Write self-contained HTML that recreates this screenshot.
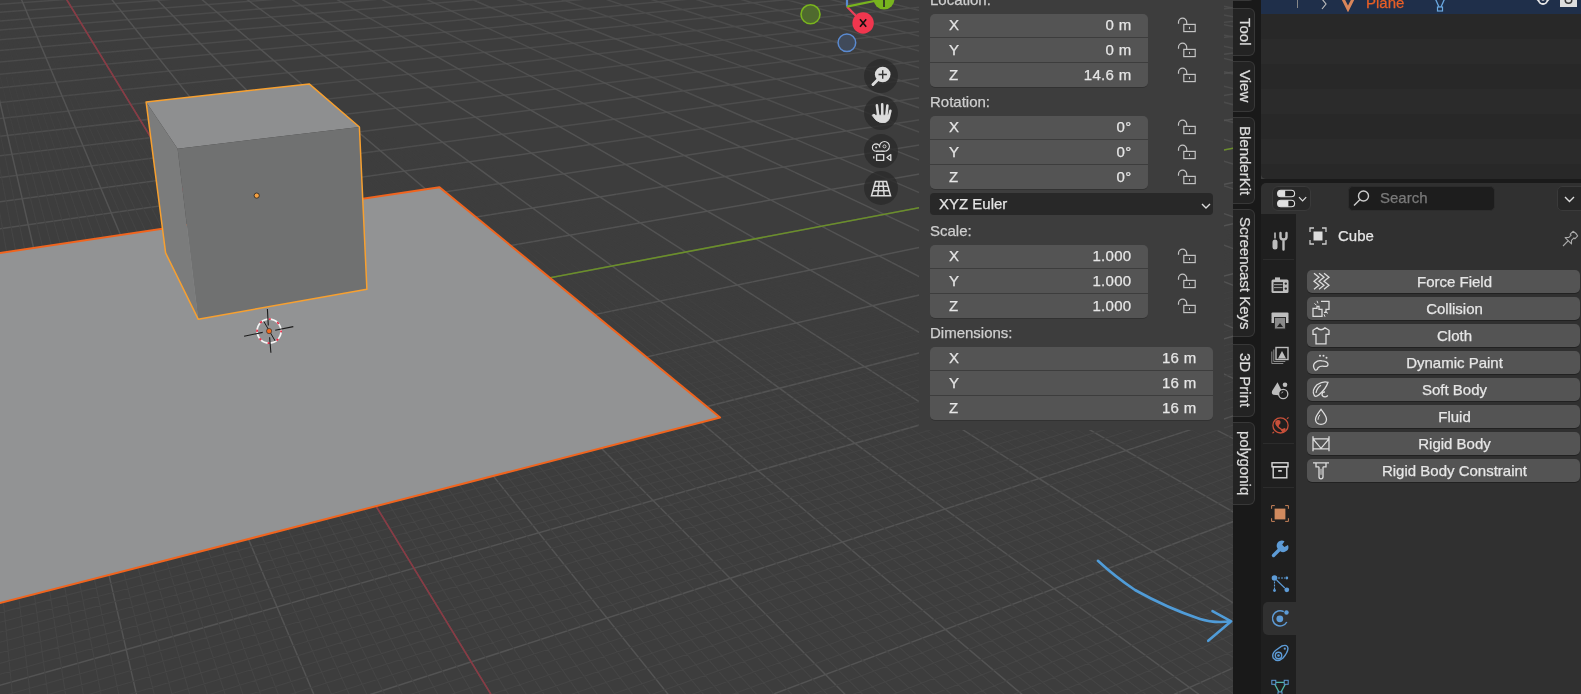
<!DOCTYPE html>
<html><head><meta charset="utf-8"><style>
*{margin:0;padding:0}
html,body{width:1581px;height:694px;overflow:hidden;background:#3d3d3d;font-family:"Liberation Sans",sans-serif;-webkit-text-stroke:0.25px currentColor}
.abs{position:absolute;will-change:transform}
.fb{border-radius:5px;overflow:hidden;box-shadow:0 1px 0 rgba(0,0,0,0.18)}
.row{background:#545454}
.row .lab{position:absolute;left:19px;top:2.5px;font-size:15px;color:#e6e6e6}
.row .val{position:absolute;right:16.5px;top:2.5px;letter-spacing:0.3px;font-size:15px;color:#e6e6e6}
.lbl{font-size:15px;color:#cfcfcf}
.txt{font-size:15px;color:#e6e6e6}
.tab{background:#232323;border:1px solid #383838;border-left:none;border-radius:0 6px 6px 0;box-sizing:border-box}
.vt{display:flex;align-items:center;justify-content:center;padding-left:2px;box-sizing:border-box}
.vt span{writing-mode:vertical-rl;font-size:15px;color:#dcdcdc;white-space:nowrap}
.pbtn{background:#545454;border-radius:5px;box-shadow:0 1px 0 rgba(0,0,0,0.3);text-align:center}
.pbtn span{display:block;font-size:15px;line-height:23px;color:#e6e6e6;padding-left:22px}
</style></head><body>
<svg class="abs" style="left:0;top:0" width="1233" height="694" viewBox="0 0 1233 694">
<rect width="1233" height="694" fill="#3d3d3d"/>
<g stroke-width="1.2" fill="none">
<path d="M-113.8 -2.5L963.5 -76.7M-114.9 4.9L985.5 -73.3M-116.1 12.8L1008.5 -69.7M-117.3 21.2L1032.5 -66.0M-118.7 30.2L1057.5 -62.1M-120.1 39.8L1083.7 -58.1M-121.7 50.1L1111.2 -53.8M-123.4 61.3L1140.0 -49.4M-125.2 73.4L1170.2 -44.7M-127.1 86.4L1202.0 -39.8M-129.3 100.6L1235.4 -34.6M-131.6 116.2L1270.6 -29.1M-12.9 120.0L1307.7 -23.4M277.3 104.7L1347.0 -17.3M555.7 89.1L1388.5 -10.9M820.2 73.5L1432.5 -4.1M1078.5 57.0L1479.3 3.2M375.6 -42.1L477.4 1.8M407.3 -44.2L563.7 18.2M438.3 -46.3L662.7 36.9M468.7 -48.3L761.2 53.1M498.5 -50.3L871.9 71.2M527.6 -52.3L986.0 88.3M556.0 -54.2L1113.3 107.3M583.9 -56.0L1240.8 124.5M611.3 -57.9L1381.4 143.4M638.0 -59.6L1516.9 159.2M664.3 -61.4L1687.5 182.0M690.0 -63.1L1851.2 201.3M715.2 -64.8L1999.8 215.7M739.9 -66.4L2192.6 238.2M764.1 -68.1L2366.1 255.1M787.9 -69.7L2552.3 273.3M811.2 -71.2L2571.9 259.0M834.1 -72.7L2590.4 245.4M856.6 -74.2L2608.0 232.6M878.6 -75.7L2624.6 220.5M900.2 -77.2L2640.4 208.9M921.5 -78.6L2655.4 198.0M942.4 -80.0L2669.7 187.5M962.8 -81.3L2683.3 177.6" stroke="#535353" stroke-width="1.5" stroke-opacity="0.625"/>
<path d="M-136.9 151.9L277.3 104.7M-140.0 172.6L555.7 89.1M-81.5 187.8L820.2 73.5M264.4 166.2L1078.5 57.0M590.8 144.6L1317.8 41.0M895.7 123.4L1538.4 25.7M1188.1 101.2L1638.7 27.9M241.1 -33.1L304.4 7.5M275.9 -35.4L388.9 29.2M322.8 -31.0L484.4 52.3M397.8 -14.2L591.2 76.6M477.4 1.8L700.1 98.0M563.7 18.2L824.8 122.4M662.7 36.9L956.0 145.8M761.2 53.1L1105.3 172.4M871.9 71.2L1257.8 196.8M986.0 88.3L1429.6 224.3M1113.3 107.3L1597.8 247.8" stroke="#535353" stroke-width="1.5" stroke-opacity="0.750"/>
<path d="M-147.4 221.4L264.4 166.2M-151.7 250.4L590.8 144.6M246.3 222.1L895.7 123.4M616.3 194.3L1188.1 101.2M956.8 167.4L1454.2 80.2M131.8 -25.8L161.3 4.0M169.1 -28.3L234.8 27.4M228.1 -14.3L320.2 53.0M304.4 7.5L418.6 80.7M388.9 29.2L530.7 110.2M484.4 52.3L656.5 141.1M591.2 76.6L795.0 172.4M700.1 98.0L943.6 203.1M824.8 122.4L1098.1 231.4M956.0 145.8L1273.6 263.6M1105.3 172.4L1474.9 300.6" stroke="#535353" stroke-width="1.5" stroke-opacity="0.875"/>
<path d="M-156.7 283.4L246.3 222.1M-162.3 321.1L616.3 194.3M-168.8 364.6L956.8 167.4M-176.5 415.6L1278.1 139.6M-185.5 475.9L1574.3 112.0M-196.4 548.6L1848.9 83.8M-209.8 637.7L1991.7 82.5M-226.6 749.5L2080.5 96.3M-248.2 894.1L2177.2 111.3M-277.4 1088.3L2283.0 127.7M-318.5 1362.9L2399.2 145.7M-381.2 1781.0L2527.4 165.5M-488.2 2494.4L2669.7 187.5M-712.1 3987.7L2828.3 212.1M-69.4 -12.4L16.9 2125.4M-27.1 -15.2L401.7 1844.3M14.1 -18.0L704.5 1623.1M54.3 -20.6L949.1 1444.5M97.2 -18.7L1150.7 1297.1M161.3 4.0L1319.8 1173.6M234.8 27.4L1463.7 1068.5M320.2 53.0L1587.5 978.0M418.6 80.7L1695.3 899.3M530.7 110.2L1789.9 830.2M656.5 141.1L1873.7 769.0M795.0 172.4L1948.3 714.5M943.6 203.1L2015.3 665.6M1098.1 231.4L2075.6 621.5" stroke="#535353" stroke-width="1.5" stroke-opacity="1.000"/>
<path d="M-170.3 374.2L0.4 343.8M-171.0 379.1L54.5 338.6M-171.8 384.0L107.7 333.5M-172.5 389.1L159.9 328.5M-173.3 394.2L211.2 323.6M-174.1 399.4L261.6 318.8M-174.9 404.7L287.8 318.4M-113.3 398.4L337.1 313.6M6.1 386.1L433.1 304.4M35.7 385.6L479.9 299.9M93.3 379.6L525.9 295.4M149.8 373.8L571.2 291.1M205.3 368.0L615.7 286.8M259.7 362.4L659.5 282.6M288.0 361.9L702.6 278.4M341.1 356.4L744.9 274.4M393.2 351.0L786.7 270.3M494.6 340.5L868.1 262.5M543.9 335.3L907.9 258.7M592.4 330.3L963.1 251.5M639.9 325.3L1001.3 247.8M686.7 320.5L1038.9 244.2M732.7 315.7L1076.0 240.7M777.8 311.0L1112.5 237.2M822.2 306.4L1162.4 230.6M865.9 301.9L1197.5 227.2M951.0 293.0L1279.1 217.7M1009.3 284.8L1312.4 214.5M1049.7 280.6L1345.2 211.4M1089.4 276.5L1389.4 205.5M1128.5 272.5L1421.0 202.5M1167.0 268.5L1463.3 196.9M1219.4 261.0L1493.9 194.0M-13.6 3.3L-2.4 45.3M-8.6 4.9L2.9 44.8M-3.5 6.5L8.9 47.0M1.7 8.1L15.1 49.2M6.9 9.7L21.3 51.4M11.5 9.3L27.6 53.6M16.8 11.0L33.0 53.2M22.2 12.7L39.4 55.4M33.3 16.1L52.6 60.1M39.9 19.9L59.4 62.5M45.6 21.7L66.3 64.9M51.5 23.5L73.3 67.4M57.4 25.4L80.4 69.9M63.4 27.2L87.6 72.5M69.5 29.1L94.9 75.1M75.6 31.0L102.4 77.7M81.9 33.0L110.0 80.4M94.7 37.0L125.5 85.9M102.9 41.5L133.5 88.7M109.6 43.6L141.6 91.6M116.4 45.7L149.9 94.5M123.3 47.9L158.3 97.5M130.3 50.1L166.9 100.5M137.5 52.3L175.6 103.6M146.8 57.4L184.5 106.7M154.3 59.7L193.5 109.9M169.5 64.5L212.1 116.5M177.3 67.0L221.7 119.9M185.3 69.5L231.4 123.3M193.4 72.0L241.4 126.8M201.6 74.6L251.5 130.4M212.9 80.5L261.9 134.0M221.4 83.2L272.4 137.8M230.2 86.0L283.2 141.6M239.1 88.8L294.1 145.4M257.3 94.6L316.8 153.4M266.7 97.6L328.4 157.6M276.3 100.6L335.0 156.7M286.0 103.7L347.0 160.9M295.9 106.8L359.2 165.2M305.9 110.0L371.7 169.5M316.2 113.3L384.4 174.0M326.7 116.6L397.5 178.6M337.3 120.0L410.8 183.3M359.2 126.9L438.4 192.9M370.5 130.5L445.3 191.9M382.0 134.2L459.6 196.8M393.8 137.9L474.2 201.9M405.8 141.7L489.2 207.2M418.0 145.6L504.6 212.5M430.4 149.5L520.3 218.0M443.2 153.6L527.4 216.8M456.2 157.7L543.6 222.4M483.0 166.2L577.1 233.9M489.4 165.3L594.5 239.9M503.3 169.7L601.7 238.6M517.5 174.1L619.6 244.8M532.0 178.7L637.9 251.0M546.8 183.4L656.8 257.5M562.0 188.1L664.1 256.1M568.5 187.1L683.5 262.7M584.1 192.0L703.4 269.4M616.3 202.1L731.2 274.9M632.9 207.3L752.3 282.0M639.6 206.2L773.9 289.3M656.7 211.5L781.3 287.7M674.2 216.9L803.6 295.2M692.1 222.5L826.6 302.8M698.8 221.3L834.0 301.2M717.3 227.0L857.7 309.0M736.1 232.8L882.0 317.1M762.3 237.5L914.6 323.6M782.2 243.6L922.0 321.8M802.6 249.8L947.9 330.3M809.4 248.5L974.6 339.0M830.3 254.8L982.0 337.1M851.9 261.4L1009.6 346.1M858.7 260.0L1038.0 355.3M880.8 266.7L1045.4 353.3M903.5 273.5L1074.8 362.7M933.7 279.1L1112.5 370.4M957.8 286.3L1119.8 368.3M964.6 284.7L1151.1 378.2M989.3 292.1L1183.5 388.5M1014.8 299.7L1190.8 386.3M1021.6 298.0L1224.3 396.8M1047.8 305.8L1231.6 394.5M1054.6 304.1L1266.1 405.3M1081.6 312.0L1273.4 403.0M1116.1 318.4L1316.3 411.7M1144.8 326.8L1353.3 423.1M1151.5 325.0L1360.5 420.6M1181.0 333.5L1398.8 432.4M1211.4 342.4L1405.8 429.8M1218.1 340.5L1445.5 441.9" stroke="#454545" stroke-width="1.1" stroke-opacity="0.125"/>
<path d="M-177.3 421.2L6.1 386.1M-178.2 426.8L35.7 385.6M-179.0 432.6L93.3 379.6M-179.9 438.5L149.8 373.8M-147.7 437.9L205.3 368.0M-83.3 430.9L259.7 362.4M-20.3 424.0L288.0 361.9M41.5 417.3L341.1 356.4M102.0 410.7L393.2 351.0M191.5 403.7L494.6 340.5M249.2 397.4L543.9 335.3M305.8 391.2L592.4 330.3M361.3 385.1L639.9 325.3M415.7 379.2L686.7 320.5M469.1 373.3L732.7 315.7M497.7 372.9L777.8 311.0M549.7 367.1L822.2 306.4M600.8 361.5L865.9 301.9M700.1 350.6L951.0 293.0M748.4 345.3L1009.3 284.8M795.8 340.1L1049.7 280.6M861.9 330.4L1089.4 276.5M907.1 325.4L1128.5 272.5M951.5 320.6L1167.0 268.5M995.1 315.8L1219.4 261.0M1038.0 311.1L1256.4 257.2M1080.2 306.5L1292.7 253.5M1178.2 293.5L1376.6 242.9M1217.8 289.1L1411.0 239.3M-8.3 43.2L-0.5 74.4M-2.4 45.3L6.2 77.0M2.9 44.8L12.0 76.5M8.9 47.0L18.8 79.1M15.1 49.2L25.7 81.8M21.3 51.4L32.7 84.6M27.6 53.6L38.7 84.0M33.0 53.2L45.8 86.8M39.4 55.4L53.2 89.6M52.6 60.1L68.2 95.5M59.4 62.5L74.2 94.8M66.3 64.9L82.0 97.8M73.3 67.4L89.9 100.8M80.4 69.9L97.9 103.9M87.6 72.5L106.1 107.1M94.9 75.1L114.4 110.3M102.4 77.7L122.9 113.6M110.0 80.4L131.6 116.9M125.5 85.9L146.7 119.5M133.5 88.7L155.7 123.0M141.6 91.6L165.0 126.5M149.9 94.5L174.3 130.1M158.3 97.5L183.9 133.7M166.9 100.5L193.7 137.4M175.6 103.6L203.6 141.2M184.5 106.7L213.8 145.1M193.5 109.9L224.1 149.0M212.1 116.5L245.5 157.2M221.7 119.9L256.5 161.4M231.4 123.3L267.8 165.7M241.4 126.8L274.7 164.8M251.5 130.4L286.2 169.1M261.9 134.0L298.0 173.6M272.4 137.8L310.1 178.2M283.2 141.6L322.5 182.8M294.1 145.4L335.1 187.6M316.8 153.4L361.2 197.5M328.4 157.6L368.4 196.4M335.0 156.7L382.0 201.5M347.0 160.9L395.8 206.7M359.2 165.2L410.1 212.0M371.7 169.5L424.6 217.5M384.4 174.0L439.6 223.1M397.5 178.6L454.9 228.8M410.8 183.3L462.3 227.6M438.4 192.9L494.1 239.4M445.3 191.9L510.7 245.6M459.6 196.8L518.2 244.2M474.2 201.9L535.3 250.5M489.2 207.2L552.7 256.9M504.6 212.5L570.7 263.5M520.3 218.0L589.1 270.3M527.4 216.8L596.8 268.9M543.6 222.4L615.8 275.8M577.1 233.9L643.0 281.4M594.5 239.9L663.1 288.7M601.7 238.6L683.8 296.2M619.6 244.8L705.0 303.9M637.9 251.0L712.9 302.2M656.8 257.5L734.8 310.1M664.1 256.1L757.4 318.2M683.5 262.7L765.3 316.4M703.4 269.4L788.6 324.7M731.2 274.9L820.5 331.4M752.3 282.0L845.3 340.2M773.9 289.3L870.8 349.2M781.3 287.7L878.8 347.3M803.6 295.2L905.2 356.5M826.6 302.8L913.1 354.5M834.0 301.2L940.4 364.0M857.7 309.0L968.5 373.8M882.0 317.1L976.5 371.7M914.6 323.6L1013.5 379.6M922.0 321.8L1043.6 389.9M947.9 330.3L1074.7 400.5M974.6 339.0L1082.6 398.2M982.0 337.1L1114.9 409.2M1009.6 346.1L1122.7 406.8M1038.0 355.3L1156.1 418.1M1045.4 353.3L1163.9 415.6M1074.8 362.7L1198.4 427.2M1112.5 370.4L1242.0 436.6M1119.8 368.3L1279.1 448.9M1151.1 378.2L1286.8 446.2M1183.5 388.5L1325.3 458.9M1190.8 386.3L1332.9 456.1M1224.3 396.8L1372.8 469.2M1231.6 394.5L1380.3 466.3" stroke="#454545" stroke-width="1.1" stroke-opacity="0.250"/>
<path d="M-183.6 463.0L41.5 417.3M-184.6 469.4L102.0 410.7M-83.5 461.1L191.5 403.7M-17.7 453.6L249.2 397.4M46.8 446.3L305.8 391.2M109.9 439.1L361.3 385.1M141.8 438.5L415.7 379.2M203.2 431.5L469.1 373.3M263.3 424.6L497.7 372.9M322.1 417.9L549.7 367.1M379.8 411.3L600.8 361.5M491.6 398.5L700.1 350.6M545.9 392.3L748.4 345.3M599.1 386.2L795.8 340.1M628.1 385.7L861.9 330.4M680.0 379.7L907.1 325.4M730.8 373.9L951.5 320.6M801.9 363.0L995.1 315.8M850.2 357.4L1038.0 311.1M897.7 352.0L1080.2 306.5M990.0 341.4L1178.2 293.5M1034.9 336.3L1217.8 289.1M1079.0 331.3L1256.8 284.9M1122.3 326.3L1309.5 276.9M1181.4 317.0L1346.9 272.9M1222.7 312.3L1383.6 268.9M-0.5 74.4L6.4 101.9M6.2 77.0L13.7 105.0M12.0 76.5L21.1 108.1M18.8 79.1L27.5 107.5M25.7 81.8L35.1 110.7M32.7 84.6L42.9 113.9M38.7 84.0L49.3 113.2M45.8 86.8L57.2 116.6M53.2 89.6L65.3 120.0M68.2 95.5L80.1 122.7M74.2 94.8L88.6 126.2M82.0 97.8L97.2 129.7M89.9 100.8L106.0 133.4M97.9 103.9L115.0 137.1M106.1 107.1L121.7 136.3M114.4 110.3L130.9 140.1M122.9 113.6L140.3 143.9M131.6 116.9L149.9 147.8M146.7 119.5L169.7 156.0M155.7 123.0L176.6 155.1M165.0 126.5L186.8 159.2M174.3 130.1L197.3 163.5M183.9 133.7L208.0 167.8M193.7 137.4L218.9 172.3M203.6 141.2L230.1 176.8M213.8 145.1L241.5 181.4M224.1 149.0L253.1 186.2M245.5 157.2L272.4 190.0M256.5 161.4L284.6 194.9M267.8 165.7L297.2 200.0M274.7 164.8L310.0 205.1M286.2 169.1L323.2 210.4M298.0 173.6L330.7 209.3M310.1 178.2L344.2 214.7M322.5 182.8L358.1 220.2M335.1 187.6L372.3 225.9M361.2 197.5L401.7 237.6M368.4 196.4L409.4 236.3M382.0 201.5L424.8 242.4M395.8 206.7L440.6 248.6M410.1 212.0L456.7 255.0M424.6 217.5L473.3 261.6M439.6 223.1L481.2 260.2M454.9 228.8L498.3 266.9M462.3 227.6L515.9 273.7M494.1 239.4L542.0 279.3M510.7 245.6L560.6 286.5M518.2 244.2L579.7 293.9M535.3 250.5L599.4 301.6M552.7 256.9L607.5 299.9M570.7 263.5L627.8 307.7M589.1 270.3L648.7 315.8M596.8 268.9L656.9 314.0M615.8 275.8L678.5 322.3M643.0 281.4L709.0 328.9M663.1 288.7L732.0 337.6M683.8 296.2L755.7 346.5M705.0 303.9L764.0 344.6M712.9 302.2L788.4 353.8M734.8 310.1L813.7 363.2M757.4 318.2L822.0 361.2M765.3 316.4L848.1 370.9M788.6 324.7L875.1 380.9M820.5 331.4L911.4 389.0M845.3 340.2L919.7 386.8M870.8 349.2L948.6 397.4M878.8 347.3L978.5 408.3M905.2 356.5L986.9 405.9M913.1 354.5L1017.9 417.2M940.4 364.0L1026.2 414.7M968.5 373.8L1058.3 426.3M976.5 371.7L1066.5 423.8M1013.5 379.6L1134.3 447.9M1043.6 389.9L1142.5 445.2M1074.7 400.5L1178.3 457.9M1082.6 398.2L1186.5 455.1M1114.9 409.2L1223.6 468.1M1122.7 406.8L1231.7 465.3M1156.1 418.1L1270.2 478.7M1163.9 415.6L1278.3 475.8M1198.4 427.2L1318.3 489.6" stroke="#454545" stroke-width="1.1" stroke-opacity="0.375"/>
<path d="M-188.6 496.3L46.8 446.3M-153.6 495.6L109.9 439.1M-83.7 487.3L141.8 438.5M-15.4 479.3L203.2 431.5M18.6 478.6L263.3 424.6M85.0 470.7L322.1 417.9M149.8 463.0L379.8 411.3M275.4 448.1L491.6 398.5M307.7 447.5L545.9 392.3M368.0 440.3L599.1 386.2M427.1 433.2L628.1 385.7M485.0 426.3L680.0 379.7M541.7 419.5L730.8 373.9M597.2 412.9L801.9 363.0M651.6 406.4L850.2 357.4M705.0 400.1L897.7 352.0M808.5 387.7L990.0 341.4M858.7 381.7L1034.9 336.3M908.0 375.8L1079.0 331.3M956.4 370.1L1122.3 326.3M1003.8 364.4L1181.4 317.0M1068.9 353.8L1222.7 312.3M1114.0 348.5L1263.4 307.7M1158.3 343.2L1318.3 299.0M1201.8 338.0L1357.1 294.6M-7.1 99.5L-1.2 127.4M6.4 101.9L13.4 130.2M13.7 105.0L21.4 133.8M21.1 108.1L28.3 133.0M27.5 107.5L36.5 136.8M35.1 110.7L44.8 140.5M42.9 113.9L51.7 139.7M49.3 113.2L60.3 143.6M57.2 116.6L69.1 147.5M65.3 120.0L76.1 146.7M80.1 122.7L94.2 154.7M88.6 126.2L101.3 153.8M97.2 129.7L110.7 158.0M106.0 133.4L120.3 162.2M115.0 137.1L130.2 166.5M121.7 136.3L140.2 170.9M130.9 140.1L147.5 170.0M140.3 143.9L157.8 174.5M149.9 147.8L168.3 179.0M169.7 156.0L190.2 188.5M176.6 155.1L197.6 187.5M186.8 159.2L208.9 192.4M197.3 163.5L220.5 197.4M208.0 167.8L232.4 202.5M218.9 172.3L244.6 207.7M230.1 176.8L252.2 206.6M241.5 181.4L264.7 211.9M253.1 186.2L277.5 217.4M272.4 190.0L304.1 228.7M284.6 194.9L311.9 227.5M297.2 200.0L325.8 233.3M310.0 205.1L340.0 239.3M323.2 210.4L354.6 245.4M330.7 209.3L369.5 251.7M344.2 214.7L377.5 250.4M358.1 220.2L392.9 256.8M372.3 225.9L408.7 263.4M401.7 237.6L441.7 277.2M409.4 236.3L449.9 275.7M424.8 242.4L467.1 282.8M440.6 248.6L484.8 290.1M456.7 255.0L493.1 288.5M473.3 261.6L511.4 296.0M481.2 260.2L530.2 303.7M498.3 266.9L549.5 311.7M515.9 273.7L557.9 309.9M542.0 279.3L598.5 326.4M560.6 286.5L619.7 335.0M579.7 293.9L628.2 333.2M599.4 301.6L650.1 342.0M607.5 299.9L672.7 351.1M627.8 307.7L681.4 349.1M648.7 315.8L704.7 358.4M656.9 314.0L728.9 368.0M678.5 322.3L737.5 365.9M709.0 328.9L771.2 373.7M732.0 337.6L797.0 383.8M755.7 346.5L823.7 394.2M764.0 344.6L832.5 392.0M788.4 353.8L860.1 402.7M813.7 363.2L888.8 413.8M822.0 361.2L897.5 411.4M848.1 370.9L927.2 422.8M875.1 380.9L935.9 420.4M911.4 389.0L998.6 444.3M919.7 386.8L1007.3 441.6M948.6 397.4L1040.4 454.1M978.5 408.3L1049.1 451.4M986.9 405.9L1083.4 464.3M1017.9 417.2L1092.1 461.5M1026.2 414.7L1127.8 474.8M1058.3 426.3L1136.3 471.9M1066.5 423.8L1173.4 485.5M1134.3 447.9L1220.5 496.7M1142.5 445.2L1260.5 511.3M1178.3 457.9L1269.0 508.1M1186.5 455.1L1310.7 523.2M1223.6 468.1L1319.1 519.9M1231.7 465.3L1362.4 535.5" stroke="#454545" stroke-width="1.1" stroke-opacity="0.500"/>
<path d="M-192.9 525.3L18.6 478.6M-156.5 524.5L85.0 470.7M-83.9 515.6L149.8 463.0M22.4 506.2L275.4 448.1M91.2 497.7L307.7 447.5M158.4 489.4L368.0 440.3M224.1 481.3L427.1 433.2M288.4 473.3L485.0 426.3M351.3 465.6L541.7 419.5M384.3 464.9L597.2 412.9M445.3 457.3L651.6 406.4M505.0 449.9L705.0 400.1M620.7 435.6L808.5 387.7M676.8 428.6L858.7 381.7M731.7 421.8L908.0 375.8M785.4 415.1L956.4 370.1M838.1 408.6L1003.8 364.4M889.7 402.2L1068.9 353.8M940.3 395.9L1114.0 348.5M989.9 389.8L1158.3 343.2M1057.9 378.3L1201.8 338.0M1151.2 366.8L1302.3 323.5M1196.6 361.2L1343.0 318.7M-8.0 128.1L-2.6 156.1M-1.2 127.4L4.7 155.2M13.4 130.2L20.5 158.5M21.4 133.8L29.2 162.7M28.3 133.0L36.5 161.8M36.5 136.8L45.5 166.1M44.8 140.5L52.9 165.2M51.7 139.7L62.0 169.6M60.3 143.6L71.4 174.1M69.1 147.5L78.9 173.1M76.1 146.7L88.5 177.7M94.2 154.7L105.9 181.3M101.3 153.8L116.1 186.1M110.7 158.0L126.5 190.9M120.3 162.2L137.1 195.9M130.2 166.5L144.8 194.8M140.2 170.9L155.7 199.8M147.5 170.0L166.9 205.0M157.8 174.5L174.7 203.9M168.3 179.0L186.2 209.2M190.2 188.5L210.0 220.1M197.6 187.5L222.4 225.7M208.9 192.4L230.4 224.5M220.5 197.4L243.2 230.3M232.4 202.5L256.2 236.2M244.6 207.7L269.6 242.3M252.2 206.6L277.8 241.0M264.7 211.9L291.6 247.2M277.5 217.4L305.8 253.5M304.1 228.7L328.7 258.6M311.9 227.5L343.7 265.3M325.8 233.3L359.1 272.1M340.0 239.3L374.9 279.1M354.6 245.4L383.4 277.6M369.5 251.7L399.8 284.8M377.5 250.4L416.6 292.2M392.9 256.8L433.9 299.8M408.7 263.4L442.5 298.1M441.7 277.2L478.7 313.9M449.9 275.7L497.7 322.1M467.1 282.8L506.5 320.4M484.8 290.1L526.0 328.8M493.1 288.5L546.2 337.5M511.4 296.0L555.1 335.6M530.2 303.7L575.9 344.5M549.5 311.7L597.5 353.6M557.9 309.9L606.4 351.7M598.5 326.4L651.7 370.8M619.7 335.0L660.7 368.7M628.2 333.2L684.5 378.6M650.1 342.0L709.1 388.9M672.7 351.1L718.2 386.7M681.4 349.1L743.7 397.2M704.7 358.4L770.1 408.2M728.9 368.0L779.2 405.8M737.5 365.9L806.5 417.0M771.2 373.7L844.0 426.1M797.0 383.8L873.4 438.1M823.7 394.2L882.6 435.5M832.5 392.0L913.1 447.8M860.1 402.7L922.2 445.1M888.8 413.8L953.9 457.7M897.5 411.4L986.8 470.8M927.2 422.8L995.9 468.0M935.9 420.4L1030.1 481.5M998.6 444.3L1074.7 492.5M1007.3 441.6L1083.7 489.5M1040.4 454.1L1120.7 503.8M1049.1 451.4L1129.7 500.7M1083.4 464.3L1168.2 515.5M1092.1 461.5L1208.2 530.9M1127.8 474.8L1217.1 527.6M1136.3 471.9L1258.8 543.5M1173.4 485.5L1267.7 540.0M1220.5 496.7L1319.9 552.9" stroke="#454545" stroke-width="1.1" stroke-opacity="0.625"/>
<path d="M-197.6 556.7L22.4 506.2M-159.7 555.8L91.2 497.7M-84.1 546.2L158.4 489.4M-10.3 536.7L224.1 481.3M61.7 527.5L288.4 473.3M97.9 526.8L351.3 465.6M167.7 517.8L384.3 464.9M235.8 509.0L445.3 457.3M302.4 500.5L505.0 449.9M431.1 483.9L620.7 435.6M493.2 475.9L676.8 428.6M526.6 475.3L731.7 421.8M586.9 467.5L785.4 415.1M646.0 459.9L838.1 408.6M703.7 452.4L889.7 402.2M760.2 445.1L940.3 395.9M815.6 437.9L989.9 389.8M869.7 430.9L1057.9 378.3M995.8 411.3L1151.2 366.8M1046.0 404.9L1196.6 361.2M1095.3 398.5L1241.0 355.7M1143.5 392.3L1301.0 345.4M1190.8 386.3L1343.4 340.2M-2.6 156.1L2.6 182.9M4.7 155.2L11.6 187.7M20.5 158.5L28.7 191.5M29.2 162.7L36.6 190.5M36.5 161.8L46.2 195.4M45.5 166.1L54.1 194.4M52.9 165.2L64.0 199.4M62.0 169.6L74.1 204.6M71.4 174.1L82.1 203.5M78.9 173.1L92.5 208.7M88.5 177.7L100.5 207.6M105.9 181.3L122.2 218.4M116.1 186.1L130.4 217.2M126.5 190.9L141.7 222.8M137.1 195.9L153.3 228.6M144.8 194.8L161.5 227.3M155.7 199.8L173.5 233.2M166.9 205.0L185.8 239.2M174.7 203.9L198.4 245.3M186.2 209.2L206.8 244.0M210.0 220.1L233.1 256.7M222.4 225.7L241.6 255.3M230.4 224.5L255.4 261.9M243.2 230.3L269.5 268.6M256.2 236.2L284.0 275.6M269.6 242.3L292.7 274.1M277.8 241.0L307.7 281.1M291.6 247.2L323.1 288.4M305.8 253.5L338.9 295.9M328.7 258.6L364.1 301.9M343.7 265.3L381.0 309.8M359.1 272.1L390.0 308.1M374.9 279.1L407.4 316.2M383.4 277.6L425.3 324.5M399.8 284.8L443.8 333.0M416.6 292.2L453.0 331.2M433.9 299.8L472.1 339.9M442.5 298.1L491.8 349.0M478.7 313.9L521.5 356.3M497.7 322.1L542.6 365.8M506.5 320.4L551.9 363.8M526.0 328.8L573.8 373.5M546.2 337.5L596.4 383.7M555.1 335.6L605.7 381.5M575.9 344.5L629.2 391.9M597.5 353.6L653.4 402.6M606.4 351.7L662.8 400.3M651.7 370.8L714.0 422.7M660.7 368.7L723.5 420.2M684.5 378.6L750.5 432.0M709.1 388.9L760.0 429.4M718.2 386.7L788.1 441.5M743.7 397.2L817.1 454.0M770.1 408.2L826.7 451.3M779.2 405.8L856.9 464.2M806.5 417.0L866.5 461.4M844.0 426.1L930.5 488.4M873.4 438.1L940.1 485.4M882.6 435.5L974.1 499.6M913.1 447.8L983.6 496.5M922.2 445.1L1018.9 511.2M953.9 457.7L1028.4 508.0M986.8 470.8L1065.3 523.1M995.9 468.0L1074.7 519.8M1030.1 481.5L1113.1 535.4M1074.7 492.5L1162.5 548.1M1083.7 489.5L1204.2 564.9M1120.7 503.8L1213.5 561.2M1129.7 500.7L1257.0 578.6M1168.2 515.5L1266.2 574.8M1208.2 530.9L1311.7 592.7M1217.1 527.6L1320.8 588.8" stroke="#454545" stroke-width="1.1" stroke-opacity="0.750"/>
<path d="M-202.7 590.7L61.7 527.5M-163.2 589.8L97.9 526.8M-123.8 588.9L167.7 517.8M-45.5 578.5L235.8 509.0M30.8 568.2L302.4 500.5M142.8 557.4L431.1 483.9M214.8 547.7L493.2 475.9M285.0 538.3L526.6 475.3M353.6 529.0L586.9 467.5M420.5 520.0L646.0 459.9M485.9 511.2L703.7 452.4M549.7 502.6L760.2 445.1M584.2 501.9L815.6 437.9M646.1 493.5L869.7 430.9M765.8 477.3L995.8 411.3M823.7 469.4L1046.0 404.9M880.2 461.8L1095.3 398.5M958.2 447.5L1143.5 392.3M1011.6 440.3L1190.8 386.3M1063.9 433.3L1254.8 374.9M1115.1 426.4L1299.7 369.2M1165.2 419.6L1343.8 363.5M1214.4 413.0L1402.8 353.0M-5.3 183.9L1.3 221.5M2.6 182.9L11.1 227.2M11.6 187.7L19.7 226.0M28.7 191.5L38.5 230.6M36.6 190.5L49.0 236.5M46.2 195.4L57.7 235.2M54.1 194.4L68.5 241.2M64.0 199.4L77.2 239.9M74.1 204.6L88.4 246.1M82.1 203.5L97.1 244.8M92.5 208.7L108.7 251.1M100.5 207.6L120.6 257.5M122.2 218.4L141.7 262.7M130.4 217.2L150.6 261.3M141.7 222.8L163.3 268.1M153.3 228.6L176.4 275.0M161.5 227.3L185.3 273.5M173.5 233.2L198.8 280.5M185.8 239.2L212.7 287.8M198.4 245.3L221.8 286.2M206.8 244.0L236.2 293.7M233.1 256.7L260.1 299.7M241.6 255.3L275.4 307.5M255.4 261.9L291.2 315.5M269.5 268.6L300.5 313.8M284.0 275.6L316.8 322.0M292.7 274.1L333.6 330.5M307.7 281.1L343.0 328.6M323.1 288.4L360.4 337.3M338.9 295.9L378.3 346.3M364.1 301.9L406.4 353.5M381.0 309.8L425.6 363.0M390.0 308.1L435.3 360.9M407.4 316.2L455.1 370.6M425.3 324.5L475.7 380.7M443.8 333.0L485.4 378.5M453.0 331.2L506.7 388.8M472.1 339.9L528.8 399.4M491.8 349.0L538.6 397.1M521.5 356.3L585.2 419.3M542.6 365.8L595.1 416.9M551.9 363.8L619.7 428.5M573.8 373.5L629.7 426.0M596.4 383.7L655.3 437.9M605.7 381.5L681.8 450.3M629.2 391.9L691.8 447.6M653.4 402.6L719.4 460.4M662.8 400.3L748.0 473.6M714.0 422.7L787.9 484.3M723.5 420.2L798.0 481.4M750.5 432.0L829.0 495.4M760.0 429.4L839.1 492.4M788.1 441.5L871.4 506.8M817.1 454.0L905.0 521.9M826.7 451.3L915.1 518.6M856.9 464.2L950.2 534.2M866.5 461.4L960.2 530.8M930.5 488.4L1006.8 543.3M940.1 485.4L1045.0 559.9M974.1 499.6L1055.0 556.3M983.6 496.5L1094.8 573.5M1018.9 511.2L1104.8 569.7M1028.4 508.0L1146.4 587.5M1065.3 523.1L1156.2 583.6M1074.7 519.8L1199.7 602.0M1113.1 535.4L1209.5 598.0M1162.5 548.1L1264.6 612.8M1204.2 564.9L1312.2 632.5M1213.5 561.2L1321.8 628.2" stroke="#454545" stroke-width="1.1" stroke-opacity="0.875"/>
<path d="M-208.3 627.9L30.8 568.2M-211.3 647.7L142.8 557.4M-212.8 658.0L214.8 547.7M-214.4 668.5L285.0 538.3M-216.0 679.2L353.6 529.0M-217.7 690.2L420.5 520.0M-219.4 701.5L485.9 511.2M-221.1 713.1L549.7 502.6M-222.9 724.9L584.2 501.9M-224.7 737.1L646.1 493.5M-228.5 762.3L765.8 477.3M-230.4 775.4L823.7 469.4M-232.5 788.9L880.2 461.8M-234.5 802.7L958.2 447.5M-236.7 816.9L1011.6 440.3M-238.8 831.5L1063.9 433.3M-241.1 846.5L1115.1 426.4M-243.4 861.9L1165.2 419.6M-245.8 877.8L1214.4 413.0M-250.8 910.9L1327.1 394.4M-253.4 928.3L1372.8 388.3M-256.0 946.1L1433.6 376.9M-258.8 964.5L1477.0 371.1M-261.6 983.5L1519.5 365.4M-264.6 1003.2L1575.5 354.9M-267.6 1023.4L1616.0 349.5M-270.8 1044.3L1668.9 339.4M-274.0 1065.9L1707.5 334.3M-280.8 1111.5L1805.8 315.6M-284.4 1135.4L1841.7 310.9M-288.1 1160.3L1887.4 302.2M-292.0 1186.0L1931.8 293.7M-296.0 1212.7L1974.7 285.5M-300.2 1240.5L2016.3 277.5M-304.5 1269.3L2056.7 269.8M-309.0 1299.3L2095.8 262.3M-313.7 1330.5L2133.8 255.0M-323.6 1396.8L2206.6 241.1M-328.9 1432.1L2248.1 231.3M-334.4 1469.0L2281.7 224.9M-340.2 1507.5L2320.3 215.8M-346.3 1547.8L2351.8 209.8M-352.6 1590.0L2387.8 201.3M-359.2 1634.3L2417.4 195.7M-366.2 1680.8L2451.1 187.7M-373.5 1729.6L2483.6 179.9M-389.3 1835.1L2541.0 167.6M-397.9 1892.2L2554.7 169.7M-406.9 1952.6L2568.5 171.9M-416.5 2016.4L2582.5 174.0M-426.7 2084.1L2596.7 176.2M-437.5 2156.0L2610.9 178.4M-448.9 2232.5L2625.4 180.7M-461.1 2314.1L2640.0 182.9M-474.2 2401.2L2654.7 185.2M-503.2 2594.5L2684.7 189.9M-51.2 221.9L60.0 2093.9M-42.5 220.7L102.0 2063.3M-33.9 219.5L142.9 2033.4M-25.3 218.3L182.7 2004.3M-15.9 223.9L221.5 1976.0M-7.3 222.7L259.3 1948.3M1.3 221.5L296.2 1921.4M11.1 227.2L332.2 1895.1M19.7 226.0L367.4 1869.4M38.5 230.6L435.2 1819.9M49.0 236.5L467.9 1796.0M57.7 235.2L499.9 1772.6M68.5 241.2L531.1 1749.8M77.2 239.9L561.6 1727.5M88.4 246.1L591.5 1705.7M97.1 244.8L620.7 1684.4M108.7 251.1L649.2 1663.5M120.6 257.5L677.2 1643.1M141.7 262.7L731.3 1603.6M150.6 261.3L757.5 1584.4M163.3 268.1L783.2 1565.6M176.4 275.0L808.3 1547.3M185.3 273.5L833.0 1529.3M198.8 280.5L857.1 1511.6M212.7 287.8L880.8 1494.3M221.8 286.2L904.0 1477.4M236.2 293.7L926.8 1460.8M260.1 299.7L971.0 1428.5M275.4 307.5L992.5 1412.8M291.2 315.5L1013.5 1397.4M300.5 313.8L1034.2 1382.3M316.8 322.0L1054.5 1367.4M333.6 330.5L1074.5 1352.9M343.0 328.6L1094.1 1338.6M360.4 337.3L1113.3 1324.5M378.3 346.3L1132.2 1310.7M406.4 353.5L1169.0 1283.8M425.6 363.0L1186.9 1270.7M435.3 360.9L1204.5 1257.9M455.1 370.6L1221.8 1245.2M475.7 380.7L1238.8 1232.8M485.4 378.5L1255.6 1220.6M506.7 388.8L1272.0 1208.5M528.8 399.4L1288.2 1196.7M538.6 397.1L1304.2 1185.1M585.2 419.3L1335.3 1162.4M595.1 416.9L1350.4 1151.3M619.7 428.5L1365.4 1140.4M629.7 426.0L1380.1 1129.6M655.3 437.9L1394.6 1119.0M681.8 450.3L1408.8 1108.6M691.8 447.6L1422.8 1098.4M719.4 460.4L1436.7 1088.3M748.0 473.6L1450.3 1078.3M787.9 484.3L1476.9 1058.9M798.0 481.4L1489.9 1049.4M829.0 495.4L1502.7 1040.0M839.1 492.4L1515.4 1030.8M871.4 506.8L1527.8 1021.7M905.0 521.9L1540.1 1012.7M915.1 518.6L1552.2 1003.8M950.2 534.2L1564.2 995.1M960.2 530.8L1575.9 986.5M1006.8 543.3L1599.0 969.7M1045.0 559.9L1610.3 961.4M1055.0 556.3L1621.4 953.3M1094.8 573.5L1632.4 945.3M1104.8 569.7L1643.2 937.4M1146.4 587.5L1653.9 929.6M1156.2 583.6L1664.5 921.8M1199.7 602.0L1674.9 914.2M1209.5 598.0L1685.2 906.7" stroke="#454545" stroke-width="1.1" stroke-opacity="1.000"/>
</g>
<line x1="44.0" y1="-37.5" x2="2875.5" y2="4598.6" stroke="#8a3a44" stroke-width="1.6"/>
<line x1="-453.3" y1="468.1" x2="1953.0" y2="11.6" stroke="#6b8f2a" stroke-width="1.6"/>
<polygon points="-76.5,622.8 720.1,417.5 439.5,187.2 -77.3,264.7" fill="#929394" stroke="#f0641e" stroke-width="2" stroke-linejoin="round"/>
<polygon points="146.1,101.9 309.2,83.9 359.4,127 177.6,148.7" fill="#8e8f90"/>
<polygon points="177.6,148.7 359.4,127 366.9,289.3 198.2,319.2" fill="#707171"/>
<polygon points="146.1,101.9 177.6,148.7 198.2,319.2 165.6,252.9" fill="#7b7c7c"/>
<polygon points="146.1,101.9 309.2,83.9 359.4,127 366.9,289.3 198.2,319.2 165.6,252.9" fill="none" stroke="#f7a030" stroke-width="1.5" stroke-linejoin="round"/>
<circle cx="256.7" cy="195.6" r="2.6" fill="#f5a040" stroke="#222" stroke-width="0.8"/>
<g transform="translate(269.1,331.1)"><circle r="12" fill="none" stroke="#f4f4f4" stroke-width="1.7"/><circle r="12" fill="none" stroke="#e8304a" stroke-width="1.8" stroke-dasharray="2.4 7.02" stroke-dashoffset="1"/><path d="M-5.2 -9.5L6.1 9.9" stroke="#1a1a1a" stroke-width="1"/><path d="M-1.7 -22.1L-0.8 -5.6M0.5 6.1L1.8 21.6M-25 5.2L-6.4 1.3M6.1 -0.8L24.2 -4.5" stroke="#1a1a1a" stroke-width="1.1"/><circle r="2.6" fill="#f06a1e" stroke="#333" stroke-width="0.7"/></g>
<line x1="847" y1="6.7" x2="847" y2="-12" stroke="#5a8ad0" stroke-width="2.2"/>
<line x1="847" y1="6.7" x2="863" y2="23" stroke="#e8405a" stroke-width="2.2"/>
<line x1="847" y1="6.7" x2="884" y2="-1" stroke="#78b41e" stroke-width="2.2"/>
<circle cx="810.5" cy="14.3" r="9.5" fill="#4f6a2e" stroke="#7ab51e" stroke-width="1.6"/>
<circle cx="846.9" cy="42.8" r="8.8" fill="#404a5a" stroke="#5a8ad0" stroke-width="1.5"/>
<circle cx="884" cy="-1" r="10.5" fill="#78b41e"/>
<path d="M884 -3V7" stroke="#222" stroke-width="1.6"/>
<circle cx="863.1" cy="23" r="10.7" fill="#f0364e"/>
<path d="M860 19.2L866.2 26.8M866.2 19.2L860 26.8" stroke="#111" stroke-width="1.6"/>
<circle cx="881" cy="76.1" r="17" fill="#2a2a2a" fill-opacity="0.75"/>
<circle cx="881" cy="113" r="17" fill="#2a2a2a" fill-opacity="0.75"/>
<circle cx="881" cy="151.1" r="17" fill="#2a2a2a" fill-opacity="0.75"/>
<circle cx="881" cy="187.9" r="17" fill="#2a2a2a" fill-opacity="0.75"/>
<line x1="873" y1="84.5" x2="877.5" y2="80" stroke="#dcdcdc" stroke-width="3" stroke-linecap="round"/>
<circle cx="882.7" cy="74.5" r="7.8" fill="#dcdcdc"/>
<path d="M882.7 70.3v8.4M878.5 74.5h8.4" stroke="#333" stroke-width="1.4"/>
<g fill="#dcdcdc" stroke="#dcdcdc" stroke-linecap="round" stroke-linejoin="round"><path d="M878.3 116.5L876.9 105.4M882.3 115.5L882.2 104.4M886.3 116.5L887.4 105.5M888.8 117.5L890.4 110.8" stroke-width="2.6" fill="none"/><path d="M876.6 115.2L889.6 115.2Q890 120.5 885.5 122.4Q880 123.6 876 120.2L872.3 115.6Q872.6 113.6 875 114.6L876.8 116.6Z" stroke-width="0.9"/></g>
<g stroke="#dcdcdc" stroke-width="1.3"><circle cx="876.1" cy="147.6" r="3.6" fill="none"/><circle cx="884.5" cy="146.4" r="4.8" fill="none"/></g>
<circle cx="876.1" cy="147.6" r="2.95" fill="#303030"/><circle cx="884.5" cy="146.4" r="4.15" fill="#303030"/><rect x="876" y="147.5" width="8.5" height="3.2" fill="#303030"/>
<path d="M876.1 151.2H884.5" stroke="#dcdcdc" stroke-width="1.3"/>
<g fill="none" stroke="#dcdcdc" stroke-width="1.3" stroke-linejoin="round"><rect x="876.6" y="154.6" width="7.1" height="5.8"/><path d="M873.8 156.3V158.6M890.8 154.6V160.4L886.9 157.5Z"/></g>
<circle cx="876.1" cy="147.6" r="1" fill="#dcdcdc"/><circle cx="884.5" cy="146.4" r="1.5" fill="none" stroke="#dcdcdc" stroke-width="0.9"/>
<g fill="none" stroke="#dcdcdc" stroke-width="1.5"><path d="M875.5 181.5H886.5L890.5 195.8H871.5Z"/><path d="M874 186.2H888M872.8 190.8H889.2M879.2 181.5L877.8 195.8M882.8 181.5L884.2 195.8"/></g>
<path d="M1097.9 560.8C1110 572 1120 580 1135 590C1160 604 1185 614 1200 619C1212 623 1222 622.5 1231 621.3M1212.5 611.2L1231.2 621.3L1208.2 640.8" fill="none" stroke="#509cd8" stroke-width="2.6" stroke-linecap="round" stroke-linejoin="round"/>
</svg>
<div class="abs" style="left:919px;top:0;width:305px;height:430px;background:#3d3d3d"></div>
<div class="abs lbl" style="left:930px;top:-9px">Location:</div>
<div class="abs fb" style="left:930px;top:14px;width:218px;height:73px">
<div class="abs row" style="left:0;top:-1px;width:218px;height:24px"><span class="lab">X</span><span class="val">0 m</span></div>
<div class="abs row" style="left:0;top:24px;width:218px;height:24px"><span class="lab">Y</span><span class="val">0 m</span></div>
<div class="abs row" style="left:0;top:49px;width:218px;height:24px"><span class="lab">Z</span><span class="val">14.6 m</span></div>
</div>
<svg class="abs" style="left:1177px;top:17px" width="20" height="16" viewBox="0 0 20 16"><path d="M1.5 6.8V5.2a4.1 4.1 0 0 1 8.2 0V7" fill="none" stroke="#c4c4c4" stroke-width="1.2"/><rect x="6.8" y="7.4" width="11.4" height="7.2" fill="none" stroke="#c4c4c4" stroke-width="1.2"/><line x1="12.5" y1="9.8" x2="12.5" y2="12.2" stroke="#c4c4c4" stroke-width="1"/></svg>
<svg class="abs" style="left:1177px;top:42px" width="20" height="16" viewBox="0 0 20 16"><path d="M1.5 6.8V5.2a4.1 4.1 0 0 1 8.2 0V7" fill="none" stroke="#c4c4c4" stroke-width="1.2"/><rect x="6.8" y="7.4" width="11.4" height="7.2" fill="none" stroke="#c4c4c4" stroke-width="1.2"/><line x1="12.5" y1="9.8" x2="12.5" y2="12.2" stroke="#c4c4c4" stroke-width="1"/></svg>
<svg class="abs" style="left:1177px;top:67px" width="20" height="16" viewBox="0 0 20 16"><path d="M1.5 6.8V5.2a4.1 4.1 0 0 1 8.2 0V7" fill="none" stroke="#c4c4c4" stroke-width="1.2"/><rect x="6.8" y="7.4" width="11.4" height="7.2" fill="none" stroke="#c4c4c4" stroke-width="1.2"/><line x1="12.5" y1="9.8" x2="12.5" y2="12.2" stroke="#c4c4c4" stroke-width="1"/></svg>
<div class="abs lbl" style="left:930px;top:93px">Rotation:</div>
<div class="abs fb" style="left:930px;top:116px;width:218px;height:73px">
<div class="abs row" style="left:0;top:-1px;width:218px;height:24px"><span class="lab">X</span><span class="val">0°</span></div>
<div class="abs row" style="left:0;top:24px;width:218px;height:24px"><span class="lab">Y</span><span class="val">0°</span></div>
<div class="abs row" style="left:0;top:49px;width:218px;height:24px"><span class="lab">Z</span><span class="val">0°</span></div>
</div>
<svg class="abs" style="left:1177px;top:119px" width="20" height="16" viewBox="0 0 20 16"><path d="M1.5 6.8V5.2a4.1 4.1 0 0 1 8.2 0V7" fill="none" stroke="#c4c4c4" stroke-width="1.2"/><rect x="6.8" y="7.4" width="11.4" height="7.2" fill="none" stroke="#c4c4c4" stroke-width="1.2"/><line x1="12.5" y1="9.8" x2="12.5" y2="12.2" stroke="#c4c4c4" stroke-width="1"/></svg>
<svg class="abs" style="left:1177px;top:144px" width="20" height="16" viewBox="0 0 20 16"><path d="M1.5 6.8V5.2a4.1 4.1 0 0 1 8.2 0V7" fill="none" stroke="#c4c4c4" stroke-width="1.2"/><rect x="6.8" y="7.4" width="11.4" height="7.2" fill="none" stroke="#c4c4c4" stroke-width="1.2"/><line x1="12.5" y1="9.8" x2="12.5" y2="12.2" stroke="#c4c4c4" stroke-width="1"/></svg>
<svg class="abs" style="left:1177px;top:169px" width="20" height="16" viewBox="0 0 20 16"><path d="M1.5 6.8V5.2a4.1 4.1 0 0 1 8.2 0V7" fill="none" stroke="#c4c4c4" stroke-width="1.2"/><rect x="6.8" y="7.4" width="11.4" height="7.2" fill="none" stroke="#c4c4c4" stroke-width="1.2"/><line x1="12.5" y1="9.8" x2="12.5" y2="12.2" stroke="#c4c4c4" stroke-width="1"/></svg>
<div class="abs" style="left:930px;top:193px;width:283px;height:22px;background:#282828;border-radius:4px"></div>
<div class="abs txt" style="left:939px;top:195px">XYZ Euler</div>
<svg class="abs" style="left:1199.5px;top:200.5px" width="12" height="10"><path d="M2 3l4 4 4-4" fill="none" stroke="#ddd" stroke-width="1.4"/></svg>
<div class="abs lbl" style="left:930px;top:222px">Scale:</div>
<div class="abs fb" style="left:930px;top:245px;width:218px;height:73px">
<div class="abs row" style="left:0;top:-1px;width:218px;height:24px"><span class="lab">X</span><span class="val">1.000</span></div>
<div class="abs row" style="left:0;top:24px;width:218px;height:24px"><span class="lab">Y</span><span class="val">1.000</span></div>
<div class="abs row" style="left:0;top:49px;width:218px;height:24px"><span class="lab">Z</span><span class="val">1.000</span></div>
</div>
<svg class="abs" style="left:1177px;top:248px" width="20" height="16" viewBox="0 0 20 16"><path d="M1.5 6.8V5.2a4.1 4.1 0 0 1 8.2 0V7" fill="none" stroke="#c4c4c4" stroke-width="1.2"/><rect x="6.8" y="7.4" width="11.4" height="7.2" fill="none" stroke="#c4c4c4" stroke-width="1.2"/><line x1="12.5" y1="9.8" x2="12.5" y2="12.2" stroke="#c4c4c4" stroke-width="1"/></svg>
<svg class="abs" style="left:1177px;top:273px" width="20" height="16" viewBox="0 0 20 16"><path d="M1.5 6.8V5.2a4.1 4.1 0 0 1 8.2 0V7" fill="none" stroke="#c4c4c4" stroke-width="1.2"/><rect x="6.8" y="7.4" width="11.4" height="7.2" fill="none" stroke="#c4c4c4" stroke-width="1.2"/><line x1="12.5" y1="9.8" x2="12.5" y2="12.2" stroke="#c4c4c4" stroke-width="1"/></svg>
<svg class="abs" style="left:1177px;top:298px" width="20" height="16" viewBox="0 0 20 16"><path d="M1.5 6.8V5.2a4.1 4.1 0 0 1 8.2 0V7" fill="none" stroke="#c4c4c4" stroke-width="1.2"/><rect x="6.8" y="7.4" width="11.4" height="7.2" fill="none" stroke="#c4c4c4" stroke-width="1.2"/><line x1="12.5" y1="9.8" x2="12.5" y2="12.2" stroke="#c4c4c4" stroke-width="1"/></svg>
<div class="abs lbl" style="left:930px;top:324px">Dimensions:</div>
<div class="abs fb" style="left:930px;top:347px;width:283px;height:73px">
<div class="abs row" style="left:0;top:-1px;width:283px;height:24px"><span class="lab">X</span><span class="val">16 m</span></div>
<div class="abs row" style="left:0;top:24px;width:283px;height:24px"><span class="lab">Y</span><span class="val">16 m</span></div>
<div class="abs row" style="left:0;top:49px;width:283px;height:24px"><span class="lab">Z</span><span class="val">16 m</span></div>
</div>
<div class="abs" style="left:1233px;top:0;width:28px;height:694px;background:#191919"></div>
<div class="abs tab" style="left:1233px;top:-20px;width:22px;height:21px"></div>
<div class="abs tab" style="left:1233px;top:7.5px;width:22px;height:48.1px"></div>
<div class="abs vt" style="left:1233px;top:7.5px;width:22px;height:48.1px"><span>Tool</span></div>
<div class="abs tab" style="left:1233px;top:61px;width:22px;height:50.5px"></div>
<div class="abs vt" style="left:1233px;top:61px;width:22px;height:50.5px"><span>View</span></div>
<div class="abs tab" style="left:1233px;top:116.5px;width:22px;height:87.0px"></div>
<div class="abs vt" style="left:1233px;top:116.5px;width:22px;height:87.0px"><span>BlenderKit</span></div>
<div class="abs tab" style="left:1233px;top:208.5px;width:22px;height:128.0px"></div>
<div class="abs vt" style="left:1233px;top:208.5px;width:22px;height:128.0px"><span>Screencast Keys</span></div>
<div class="abs tab" style="left:1233px;top:343.5px;width:22px;height:73.0px"></div>
<div class="abs vt" style="left:1233px;top:343.5px;width:22px;height:73.0px"><span>3D Print</span></div>
<div class="abs tab" style="left:1233px;top:422px;width:22px;height:82.5px"></div>
<div class="abs vt" style="left:1233px;top:422px;width:22px;height:82.5px"><span>polygoniq</span></div>
<div class="abs" style="left:1261px;top:0;width:320px;height:179px;background:#282828;border-bottom-left-radius:5px;overflow:hidden">
<div class="abs" style="left:0;top:39px;width:320px;height:25px;background:#2b2b2b"></div>
<div class="abs" style="left:0;top:89px;width:320px;height:25px;background:#2b2b2b"></div>
<div class="abs" style="left:0;top:139px;width:320px;height:25px;background:#2b2b2b"></div>
<div class="abs" style="left:0;top:0;width:320px;height:14px;background:#1f2f4a"></div>
</div>
<div class="abs" style="left:1297px;top:0;width:1px;height:8px;background:#888"></div>
<svg class="abs" style="left:1318px;top:0" width="12" height="12"><path d="M4 -1l4 5-4 5" fill="none" stroke="#bbb" stroke-width="1.2"/></svg>
<svg class="abs" style="left:1340px;top:0" width="16" height="12"><path d="M2 -3L8 9L14 -3" fill="none" stroke="#d9865a" stroke-width="3"/></svg>
<div class="abs" style="left:1366px;top:-6.5px;font-size:15px;color:#ea5f26">Plane</div>
<svg class="abs" style="left:1432px;top:0" width="16" height="12"><path d="M3 -2L7 7M13 -2L9 7" stroke="#6aa8e0" stroke-width="1.3"/><rect x="5.5" y="7" width="5" height="4" fill="none" stroke="#6aa8e0" stroke-width="1.2"/></svg>
<svg class="abs" style="left:1530px;top:0" width="26" height="12"><path d="M4 -4Q13 12 22 -4Z" fill="#e6e6e6"/><circle cx="13" cy="0" r="5" fill="#e6e6e6"/><circle cx="13" cy="-0.5" r="3.6" fill="#1f2f4a"/><circle cx="13" cy="-1" r="1.8" fill="#e6e6e6"/></svg>
<svg class="abs" style="left:1559px;top:0" width="20" height="10"><rect x="1" y="-5" width="17" height="12" fill="#ddd"/><circle cx="9.5" cy="0" r="4" fill="#333"/><circle cx="9.5" cy="0" r="2.5" fill="#ddd"/></svg>
<div class="abs" style="left:1261px;top:179px;width:320px;height:515px;background:#1a1a1a"></div>
<div class="abs" style="left:1261px;top:183px;width:320px;height:31px;background:#303030;border-top-left-radius:5px"></div>
<div class="abs" style="left:1261px;top:214px;width:35px;height:480px;background:#1f1f1f"></div>
<div class="abs" style="left:1296px;top:214px;width:285px;height:480px;background:#303030"></div>
<div class="abs" style="left:1271.5px;top:186px;width:39px;height:25px;border-radius:6px;background:#282828;border:1px solid #3a3a3a;box-sizing:border-box"></div>
<svg class="abs" style="left:1276px;top:189px" width="34" height="20"><rect x="1.6" y="1.2" width="17" height="6.6" rx="3.3" fill="#1f1f1f" stroke="#e0e0e0" stroke-width="1.1"/><path d="M4.9 1.2H9.2V7.8H4.9A3.3 3.3 0 0 1 4.9 1.2Z" fill="#e0e0e0"/><rect x="1.6" y="11.2" width="17" height="6.6" rx="3.3" fill="#1f1f1f" stroke="#e0e0e0" stroke-width="1.1"/><path d="M4.9 11.2H12.4V17.8H4.9A3.3 3.3 0 0 1 4.9 11.2Z" fill="#e0e0e0"/><path d="M23 8.2l3.6 3.6 3.6-3.6" fill="none" stroke="#ddd" stroke-width="1.2"/></svg>
<div class="abs" style="left:1347.5px;top:186px;width:147px;height:25px;border-radius:5px;background:#1d1d1d;border:1px solid #2c2c2c;box-sizing:border-box"></div>
<svg class="abs" style="left:1352px;top:188px" width="20" height="20"><circle cx="11.5" cy="8" r="5" fill="none" stroke="#ccc" stroke-width="1.4"/><line x1="8" y1="11.5" x2="2" y2="17.5" stroke="#ccc" stroke-width="1.4"/></svg>
<div class="abs" style="left:1380px;top:189px;font-size:15px;color:#7a7a7a">Search</div>
<div class="abs" style="left:1557px;top:186px;width:30px;height:25px;border-radius:5px;background:#272727;border:1px solid #3a3a3a;box-sizing:border-box"></div>
<svg class="abs" style="left:1563px;top:194px" width="14" height="12"><path d="M2 3l4.5 4.5L11 3" fill="none" stroke="#ddd" stroke-width="1.4"/></svg>
<div class="abs" style="left:1263px;top:602px;width:33px;height:33px;background:#303030;border-radius:5px 0 0 5px"></div>
<div class="abs" style="left:1263px;top:259px;width:31px;height:1px;background:#2c2c2c"></div>
<div class="abs" style="left:1263px;top:443px;width:31px;height:1px;background:#2c2c2c"></div>
<div class="abs" style="left:1263px;top:487px;width:31px;height:1px;background:#2c2c2c"></div>
<svg class="abs" style="left:1309px;top:227px" width="20" height="19"><path d="M1 5V1h4M13 1h4v4M17 13v4h-4M5 17H1v-4" fill="none" stroke="#ccc" stroke-width="1.3"/><rect x="4.5" y="4.5" width="9" height="9" fill="#ddd"/></svg>
<div class="abs txt" style="left:1338px;top:227px">Cube</div>
<svg class="abs" style="left:1561px;top:226px" width="22" height="22"><g transform="translate(2,20) rotate(-45)" fill="none" stroke="#aaa" stroke-width="1.1" stroke-linejoin="round"><path d="M0 0H7.5"/><path d="M7.5 -4.5V4.5L10 2H13.5V3.3H17.5Q18.5 0 17.5 -3.3H13.5V-2H10Z"/></g></svg>
<div class="abs pbtn" style="left:1307px;top:270px;width:273px;height:23px"><span>Force Field</span></div>
<div class="abs pbtn" style="left:1307px;top:297px;width:273px;height:23px"><span>Collision</span></div>
<div class="abs pbtn" style="left:1307px;top:324px;width:273px;height:23px"><span>Cloth</span></div>
<div class="abs pbtn" style="left:1307px;top:351px;width:273px;height:23px"><span>Dynamic Paint</span></div>
<div class="abs pbtn" style="left:1307px;top:378px;width:273px;height:23px"><span>Soft Body</span></div>
<div class="abs pbtn" style="left:1307px;top:405px;width:273px;height:23px"><span>Fluid</span></div>
<div class="abs pbtn" style="left:1307px;top:432px;width:273px;height:23px"><span>Rigid Body</span></div>
<div class="abs pbtn" style="left:1307px;top:459px;width:273px;height:23px"><span>Rigid Body Constraint</span></div>
<svg class="abs" style="left:0;top:0" width="1581" height="694"><g transform="translate(1271,232.5)"><path d="M4 0v6" stroke="#bdbdbd" stroke-width="1.6"/><rect x="1.5" y="7" width="5" height="10" rx="2.5" fill="#bdbdbd"/><path d="M12.5 17V7M9.5 0.5V4.5Q9.5 7 12.5 7Q15.5 7 15.5 4.5V0.5" fill="none" stroke="#bdbdbd" stroke-width="2.4" stroke-linecap="round"/></g>
<g transform="translate(1271,276.6)"><rect x="0.5" y="3" width="17" height="13.5" rx="1.5" fill="#bdbdbd"/><rect x="4" y="0.8" width="5" height="3" fill="#bdbdbd"/><rect x="2.5" y="5.5" width="9.5" height="9" fill="#2a2a2a"/><path d="M3 8h8.5M3 11h8.5" stroke="#bdbdbd" stroke-width="0.8"/><circle cx="14.8" cy="7" r="1.2" fill="#2a2a2a"/><circle cx="14.8" cy="12" r="1.2" fill="#2a2a2a"/></g>
<g transform="translate(1271,312)"><rect x="0.5" y="0.5" width="17" height="7" rx="1" fill="#bdbdbd"/><rect x="0.5" y="7" width="3" height="4" fill="#bdbdbd"/><rect x="14.5" y="7" width="3" height="4" fill="#bdbdbd"/><rect x="3.5" y="5.5" width="11" height="11.5" fill="#8a8a8a" stroke="#2a2a2a" stroke-width="1"/><path d="M6 15l3-4 3 4z" fill="#222"/></g>
<g transform="translate(1271,346.5)"><path d="M0.8 5v12h11.5M2.8 3v12h11.5" fill="none" stroke="#8a8a8a" stroke-width="1"/><rect x="5" y="1" width="12" height="12" fill="none" stroke="#bdbdbd" stroke-width="1.4"/><path d="M7 12L11 4.5L15 12Z" fill="#bdbdbd"/></g>
<g transform="translate(1271,381.8)"><path d="M6.5 0.5L11 9.5Q11 13 7.5 13.5L2.5 13Q0 12 1.2 9Z" fill="#bdbdbd"/><circle cx="14" cy="3" r="2.3" fill="#bdbdbd"/><circle cx="12.2" cy="12.2" r="4.6" fill="#1f1f1f" stroke="#bdbdbd" stroke-width="1.3"/><path d="M10.5 11.5Q11 10.3 12.2 10" stroke="#bdbdbd" stroke-width="0.9" fill="none"/></g>
<g transform="translate(1271,416.4)"><circle cx="9.5" cy="9" r="7.6" fill="none" stroke="#c8503a" stroke-width="1.3"/><path d="M1.5 16.8L3 15.5M16 2.5L17.5 1" stroke="#c8503a" stroke-width="1.2"/><path d="M4.5 4.5Q8 2.5 9.5 5Q10 7 8 8.5Q7 10 9 11L11 12.5L14 11.5Q15.5 13 13.5 15L11.5 16Q10 14 9.5 13Q7 11.5 5.5 9.5Q3.5 7.5 4.5 4.5Z" fill="#c8503a"/></g>
<g transform="translate(1271,462)"><rect x="1" y="0.8" width="16" height="4" fill="none" stroke="#d8d8d8" stroke-width="1.4"/><rect x="2.2" y="4.8" width="13.6" height="11" fill="none" stroke="#d8d8d8" stroke-width="1.4"/><rect x="7" y="8" width="4" height="1.8" rx="0.9" fill="#d8d8d8"/></g>
<g transform="translate(1271,505)"><path d="M0.6 3.8V0.6H3.8M14.2 0.6h3.2V3.8M17.4 13.2v3.2H14.2M3.8 16.4H0.6V13.2" fill="none" stroke="#c8825a" stroke-width="1"/><rect x="3.6" y="3.6" width="10.8" height="10.8" fill="#d08a5e"/></g>
<g transform="translate(1271,540)"><path d="M2.5 15.5L9.5 8.5" stroke="#5d9bd6" stroke-width="3.4" stroke-linecap="round"/><path d="M8.2 10.2A5.2 5.2 0 0 1 13.5 1.2L11.2 4.8L13.4 7L17 4.9A5.2 5.2 0 0 1 8.2 10.2Z" fill="#5d9bd6"/></g>
<g transform="translate(1271,574.5)"><circle cx="3.5" cy="3.5" r="2.8" fill="#5d9bd6"/><circle cx="15.8" cy="15.3" r="2.4" fill="#5d9bd6"/><path d="M7 3.5H14M3.5 7V14.5" stroke="#5d9bd6" stroke-width="1.1" stroke-dasharray="2 1"/><path d="M5.5 5.5L13.8 13.5" stroke="#5d9bd6" stroke-width="1.1"/><circle cx="15.8" cy="3.5" r="1.4" fill="#5d9bd6"/><circle cx="3.5" cy="16" r="1.4" fill="#5d9bd6"/></g>
<g transform="translate(1271,609.5)"><path d="M15.8 12.5A7.6 7.6 0 1 1 12.8 2.2" fill="none" stroke="#5d9bd6" stroke-width="1.5"/><circle cx="8.8" cy="9.3" r="3.4" fill="#5d9bd6"/><circle cx="15.5" cy="3" r="2.2" fill="#5d9bd6"/></g>
<g transform="translate(1271,644.5)"><path d="M2.2 13.5Q0.5 9.5 4.5 6L11 1.5Q16.5 -0.5 17 3.8Q16.8 8 12 13.5Q6.5 18.5 2.2 13.5Z" fill="none" stroke="#5d9bd6" stroke-width="1.4"/><circle cx="7.5" cy="11" r="3.2" fill="none" stroke="#5d9bd6" stroke-width="1.4"/><circle cx="7.5" cy="11" r="1.3" fill="#5d9bd6"/><circle cx="13.8" cy="4.2" r="1.1" fill="#5d9bd6"/></g>
<g transform="translate(1271,679.5)"><path d="M2.8 2.8H15.2L9 14.5Z" fill="none" stroke="#4fb5a5" stroke-width="1.3"/><rect x="0.8" y="0.8" width="4" height="4" fill="#1f1f1f" stroke="#5d9bd6" stroke-width="1"/><rect x="13.2" y="0.8" width="4" height="4" fill="#1f1f1f" stroke="#5d9bd6" stroke-width="1"/><rect x="7" y="12.5" width="4" height="4" fill="#1f1f1f" stroke="#5d9bd6" stroke-width="1"/></g><g transform="translate(1312,272.8)" fill="none" stroke="#dcdcdc" stroke-width="1.3"><path d="M2 0.5L7 4.5L2 8.5L7 12.5L2 16.5M7 0.5L12 4.5L7 8.5L12 12.5L7 16.5M12 0.5L17 4.5L12 8.5L17 12.5L12 16.5" transform="scale(1,1)"/></g>
<g transform="translate(1312,299.8)" fill="none" stroke="#dcdcdc" stroke-width="1.3"><path d="M9 1.5h8v8h-3v3h-2"/><path d="M1 8.5h4v-2h2v3h3v7H1Z"/><path d="M2.5 3.5L4.5 5.5M5 1L6 3.5M13 12l3 1.5M12 14.5l1 2.5" stroke-width="1"/></g>
<g transform="translate(1312,326.8)" fill="none" stroke="#dcdcdc" stroke-width="1.3"><path d="M5 1L1 3.5V7.5H4V17H14V7.5H17V3.5L13 1Q9 5 5 1Z"/></g>
<g transform="translate(1312,353.8)" fill="none" stroke="#dcdcdc" stroke-width="1.3"><path d="M3 16Q0 12 3 9Q6 6 10 7Q16 7.5 16 10.5Q16 13 12 12.5Q8 12 6 14Q5 17 3 16Z"/><circle cx="8" cy="2" r="1" fill="#dcdcdc" stroke="none"/><circle cx="11.5" cy="2" r="1" fill="#dcdcdc" stroke="none"/><circle cx="14.5" cy="4" r="1" fill="#dcdcdc" stroke="none"/></g>
<g transform="translate(1312,380.8)" fill="none" stroke="#dcdcdc" stroke-width="1.3"><path d="M2.5 15Q-1 10 5 4Q11 0 16 1.5Q14 8 7 14Q4 16.5 2.5 15Z"/><path d="M4 12Q5 7 9 4.5"/><path d="M13 11q-3 0 -3 2.5q0 2.5 3 2.5q2.5 0 2.5 -1.5" /></g>
<g transform="translate(1312,407.8)" fill="none" stroke="#dcdcdc" stroke-width="1.3"><path d="M9 1.5Q3 9 3.5 12Q4 16.5 9 16.5Q14 16.5 14.5 12Q15 9 9 1.5Z"/><path d="M6 12Q6 9 8 7" stroke-width="1"/></g>
<g transform="translate(1312,434.8)" fill="none" stroke="#dcdcdc" stroke-width="1.3"><path d="M1 1.5V16.5M17 1.5V16.5M1 4H17M1 14H17M1 4L9 13.5L17 4"/></g>
<g transform="translate(1312,461.8)" fill="none" stroke="#dcdcdc" stroke-width="1.3"><path d="M1 1H17M4 1V5H7M14 1V5H11M7 5V15Q7 17 9 17Q11 17 11 15V5"/><path d="M9 7V13" stroke-width="1"/></g></svg>
</body></html>
